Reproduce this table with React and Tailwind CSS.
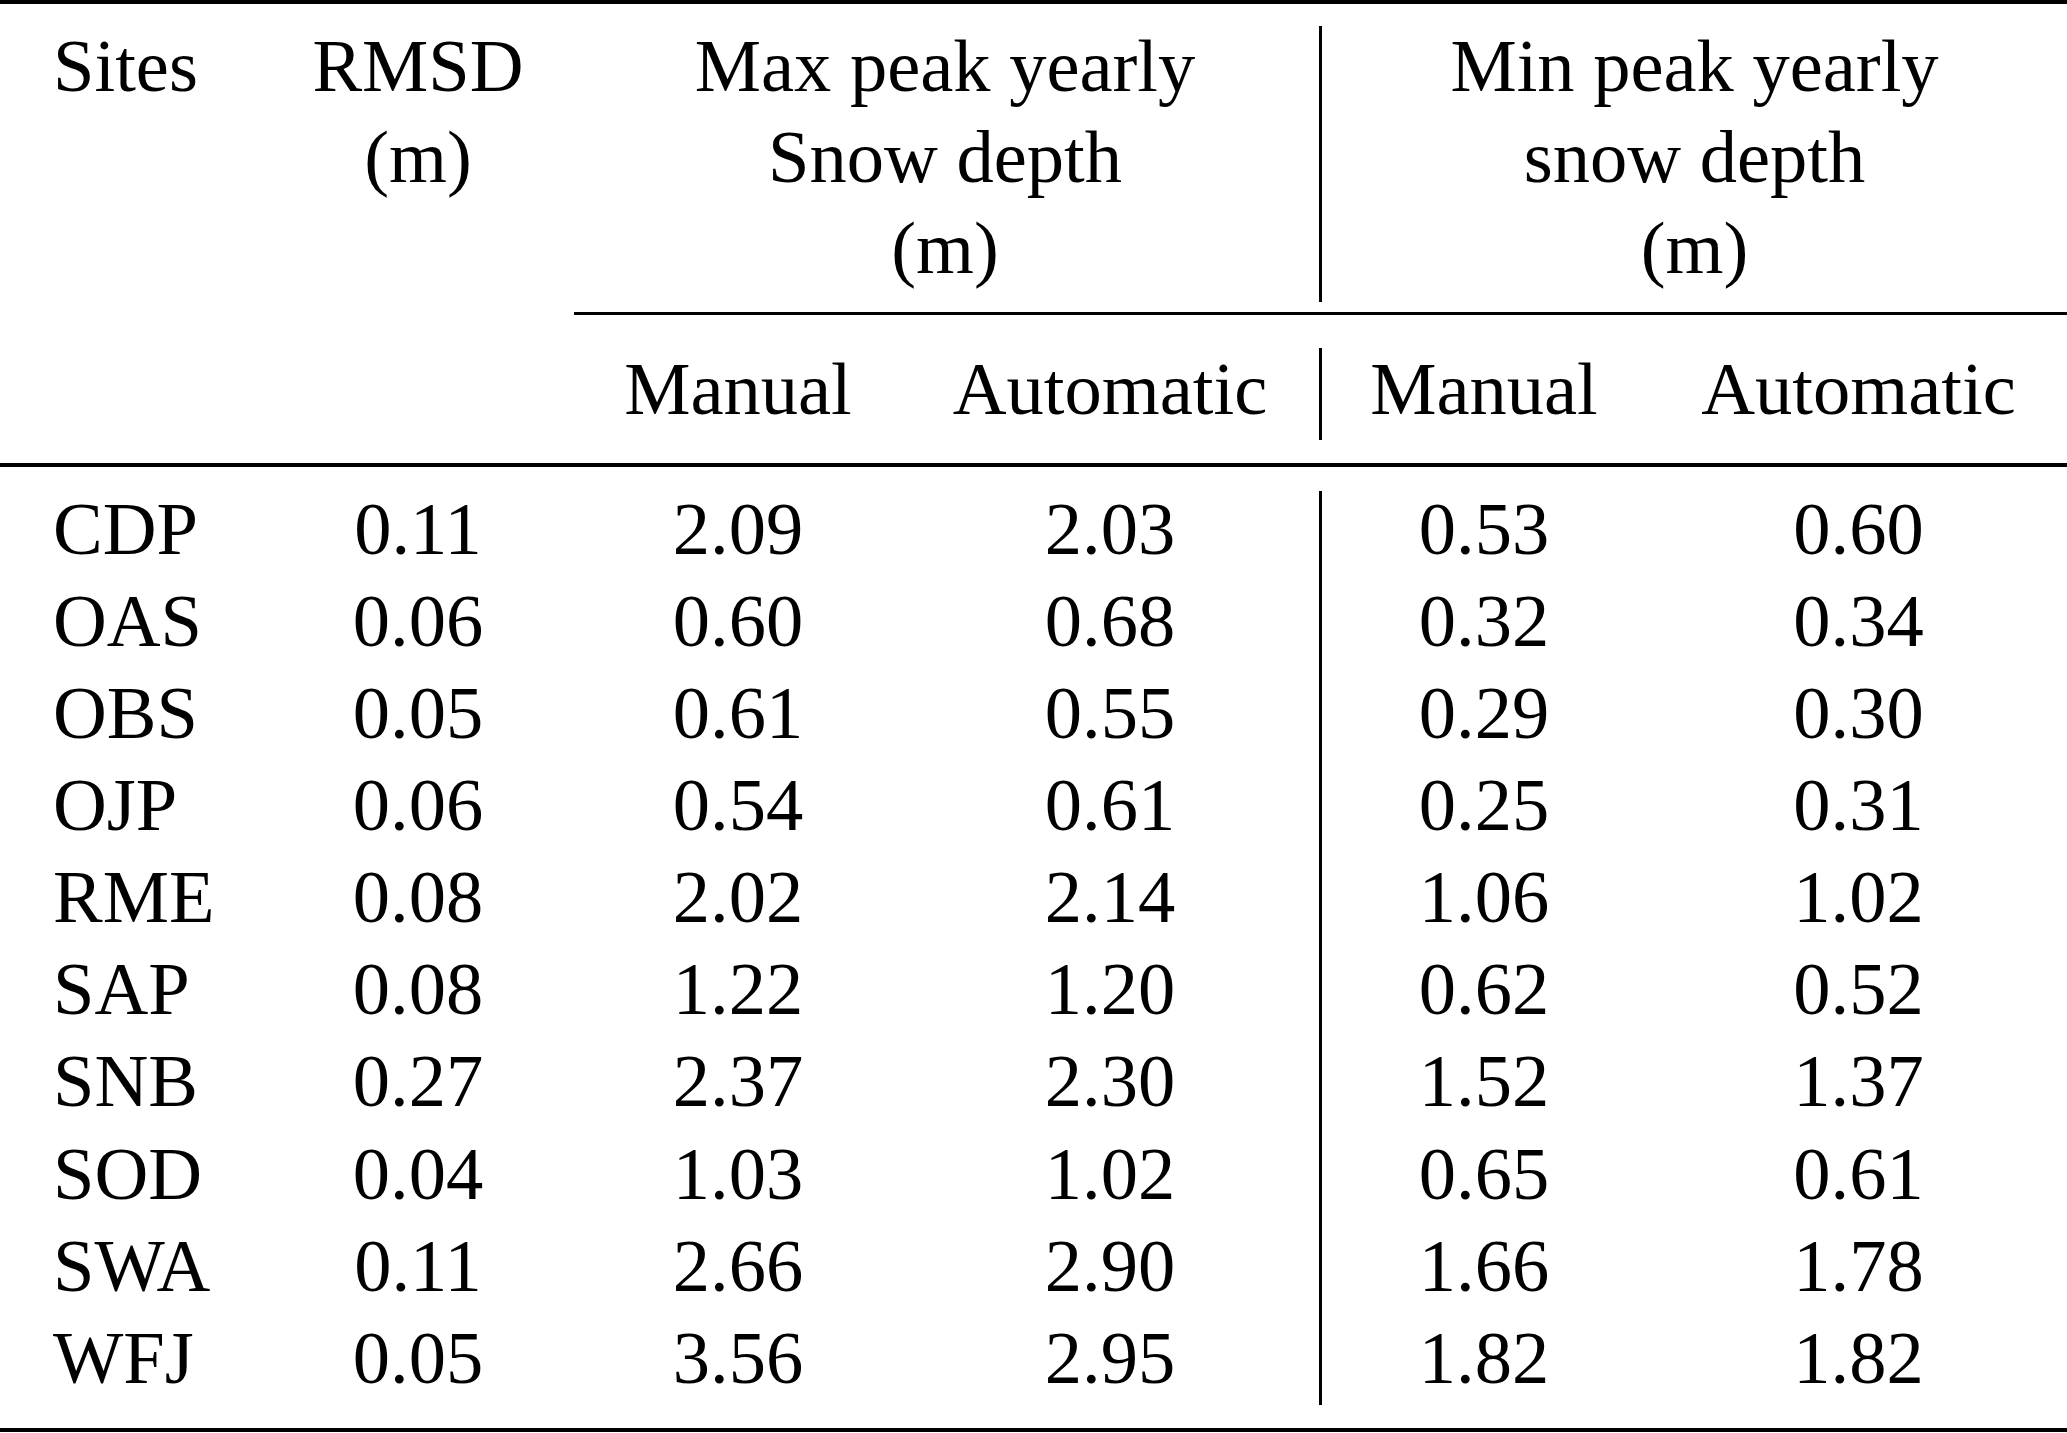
import React from 'react';

const rows = [
  ['CDP', '0.11', '2.09', '2.03', '0.53', '0.60'],
  ['OAS', '0.06', '0.60', '0.68', '0.32', '0.34'],
  ['OBS', '0.05', '0.61', '0.55', '0.29', '0.30'],
  ['OJP', '0.06', '0.54', '0.61', '0.25', '0.31'],
  ['RME', '0.08', '2.02', '2.14', '1.06', '1.02'],
  ['SAP', '0.08', '1.22', '1.20', '0.62', '0.52'],
  ['SNB', '0.27', '2.37', '2.30', '1.52', '1.37'],
  ['SOD', '0.04', '1.03', '1.02', '0.65', '0.61'],
  ['SWA', '0.11', '2.66', '2.90', '1.66', '1.78'],
  ['WFJ', '0.05', '3.56', '2.95', '1.82', '1.82'],
];

const grid = 'grid grid-cols-[280px_276px_364px_380px_40px_310px_417px]';

export default function App() {
  return (
    <div className="w-[2067px] h-[1433px] overflow-hidden bg-white text-black font-['Liberation_Serif','Times_New_Roman',serif] text-[74.5px] leading-[91px]">
      <div className="h-[4px] bg-black" />

      {/* header */}
      <div className={`${grid} h-[308px]`}>
        <div className="pl-[53px] pt-[17px]">Sites</div>
        <div className="pt-[17px] text-center">
          RMSD
          <br />
          (m)
        </div>
        <div className="col-span-2 pl-[34px] pt-[17px] text-center">
          Max peak yearly
          <br />
          Snow depth
          <br />
          (m)
        </div>
        <div className="flex justify-center">
          <div className="mt-[22px] h-[276px] w-[3px] bg-black" />
        </div>
        <div className="col-span-2 pr-[18px] pt-[17px] text-center">
          Min peak yearly
          <br />
          snow depth
          <br />
          (m)
        </div>
      </div>

      {/* cmidrule */}
      <div className="ml-[574px] h-[3px] bg-black" />

      {/* subheader */}
      <div className={`${grid} h-[148px]`}>
        <div />
        <div />
        <div className="pt-[29px] text-center">Manual</div>
        <div className="pt-[29px] text-center">Automatic</div>
        <div className="flex justify-center">
          <div className="mt-[33px] h-[92px] w-[3px] bg-black" />
        </div>
        <div className="pr-[22px] pt-[29px] text-center">Manual</div>
        <div className="pt-[29px] text-center">Automatic</div>
      </div>

      <div className="h-[4px] bg-black" />

      {/* body */}
      <div className={`${grid} h-[961px] content-start pt-[16.5px] leading-[91.7px]`}>
        <div className="col-start-5 row-start-1 row-span-10 flex justify-center">
          <div className="mt-[7.5px] h-[914px] w-[3px] bg-black" />
        </div>
        {rows.map((r) => (
          <React.Fragment key={r[0]}>
            <div className="col-start-1 pl-[53px]">{r[0]}</div>
            <div className="text-center">{r[1]}</div>
            <div className="text-center">{r[2]}</div>
            <div className="text-center">{r[3]}</div>
            <div className="col-start-6 pr-[22px] text-center">{r[4]}</div>
            <div className="text-center">{r[5]}</div>
          </React.Fragment>
        ))}
      </div>

      <div className="h-[4px] bg-black" />
    </div>
  );
}
